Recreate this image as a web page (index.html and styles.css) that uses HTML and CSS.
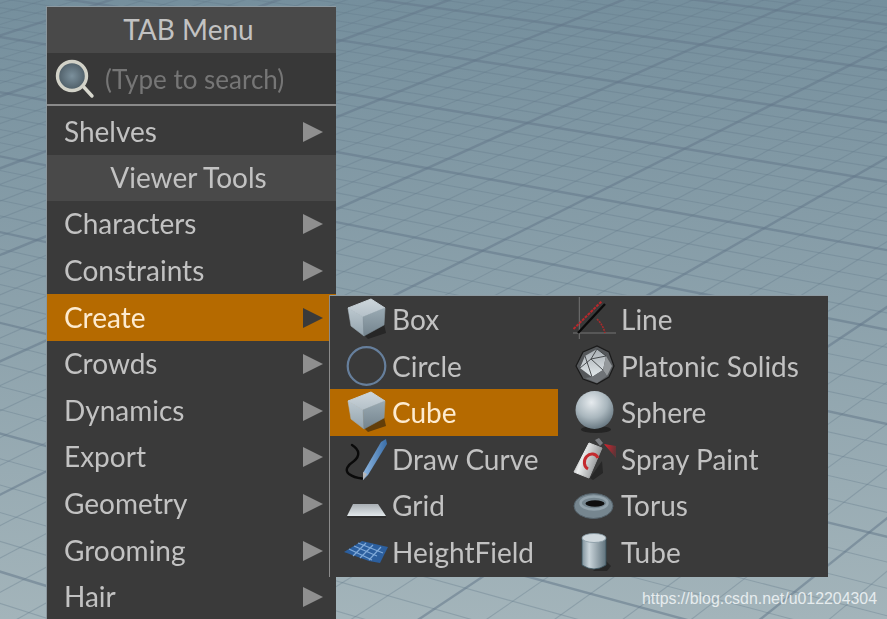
FILE: index.html
```html
<!DOCTYPE html>
<html lang="en">
<head>
  <meta charset="UTF-8" />
  <title>TAB Menu</title>
  <link rel="stylesheet" href="styles.css">
</head>
<body>
  <!-- shared gradients for the icons -->
  <svg class="defs" aria-hidden="true">
    <defs>
      <linearGradient id="faceTop" x1="0" y1="0" x2="0" y2="1"><stop offset="0" stop-color="#cdd6db"/><stop offset="1" stop-color="#b4c0c8"/></linearGradient>
      <linearGradient id="faceLeft" x1="0" y1="0" x2="0" y2="1"><stop offset="0" stop-color="#bcc8cf"/><stop offset="1" stop-color="#94a4ae"/></linearGradient>
      <linearGradient id="faceRight" x1="0" y1="0" x2="0" y2="1"><stop offset="0" stop-color="#9aaab3"/><stop offset="1" stop-color="#74848e"/></linearGradient>
      <radialGradient id="ball" cx="0.42" cy="0.3" r="0.75"><stop offset="0" stop-color="#e6ebee"/><stop offset="0.55" stop-color="#a9b6bd"/><stop offset="1" stop-color="#5f6f79"/></radialGradient>
      <radialGradient id="lens" cx="0.5" cy="0.5" r="0.6"><stop offset="0" stop-color="#7b909c"/><stop offset="1" stop-color="#44525b"/></radialGradient>
      <linearGradient id="tube" x1="0" y1="0" x2="1" y2="0"><stop offset="0" stop-color="#7f929c"/><stop offset="0.3" stop-color="#c9d4da"/><stop offset="1" stop-color="#5f727c"/></linearGradient>
      <linearGradient id="pen" x1="0" y1="0" x2="1" y2="0"><stop offset="0" stop-color="#8fb8e2"/><stop offset="1" stop-color="#3a6ea8"/></linearGradient>
      <linearGradient id="plate" x1="0" y1="0" x2="0" y2="1"><stop offset="0" stop-color="#a8aeb3"/><stop offset="1" stop-color="#e2e8eb"/></linearGradient>
      <linearGradient id="can" x1="0" y1="0" x2="1" y2="0.4"><stop offset="0" stop-color="#85888c"/><stop offset="0.4" stop-color="#eceeee"/><stop offset="1" stop-color="#8a8c8e"/></linearGradient>
      <linearGradient id="spray" x1="0" y1="0" x2="1" y2="0.3"><stop offset="0" stop-color="#e0202c"/><stop offset="1" stop-color="#e0202c" stop-opacity="0.25"/></linearGradient>
      <symbol id="cube" viewBox="0 0 40 42">
        <polygon points="17,37 37,26 39,35 21,41" fill="#111" opacity="0.5"/>
        <polygon points="1,10 24,1 38,10 16,19" fill="url(#faceTop)" stroke="url(#faceTop)" stroke-linejoin="round"/>
        <polygon points="1,10 16,19 17,38 4,28" fill="url(#faceLeft)" stroke="url(#faceLeft)" stroke-width="0.6" stroke-linejoin="round"/>
        <polygon points="16,19 38,10 37,27 17,38" fill="url(#faceRight)" stroke="url(#faceRight)" stroke-width="0.6" stroke-linejoin="round"/>
      </symbol>
    </defs>
  </svg>

  <svg class="floor" viewBox="0 0 887 619" aria-hidden="true"><g id="grid"></g></svg>

  <nav class="menu">
    <div class="menu-title">TAB Menu</div>
    <div class="search">
      <svg class="search-icon" viewBox="0 0 40 42">
        <line x1="26" y1="26" x2="37" y2="38" stroke="#d8d8ce" stroke-width="3.4" stroke-linecap="round"/>
        <circle cx="17" cy="18" r="14.5" fill="url(#lens)" stroke="#d2d2c8" stroke-width="3.4"/>
      </svg>
      <span>(Type to search)</span>
    </div>
    <div class="menu-item">Shelves<i class="arrow"></i></div>
    <div class="menu-title">Viewer Tools</div>
    <div class="menu-item">Characters<i class="arrow"></i></div>
    <div class="menu-item">Constraints<i class="arrow"></i></div>
    <div class="menu-item active">Create<i class="arrow"></i></div>
    <div class="menu-item">Crowds<i class="arrow"></i></div>
    <div class="menu-item">Dynamics<i class="arrow"></i></div>
    <div class="menu-item">Export<i class="arrow"></i></div>
    <div class="menu-item">Geometry<i class="arrow"></i></div>
    <div class="menu-item">Grooming<i class="arrow"></i></div>
    <div class="menu-item">Hair<i class="arrow"></i></div>
  </nav>

  <div class="submenu">
    <div class="tool">
      <svg class="icon" viewBox="0 0 44 44"><use href="#cube" x="3" y="1" width="40" height="42"/></svg>Box
    </div>
    <div class="tool">
      <svg class="icon" viewBox="0 0 44 44">
        <path d="M6.3 0 V42 M0 36 H43" stroke="#747474" stroke-width="1" fill="none"/>
        <path d="M0.5 32 L29 4" stroke="#b8282c" stroke-width="2" stroke-dasharray="3 1" fill="none"/>
        <path d="M24 22 Q30 28 32 36" stroke="#a82a2c" stroke-width="1.6" stroke-dasharray="2 1" fill="none"/>
        <path d="M5 36 L32 7" stroke="#0a0a0a" stroke-width="2.4" fill="none"/>
      </svg>Line
    </div>
    <div class="tool">
      <svg class="icon" viewBox="0 0 44 44"><circle cx="22.5" cy="22" r="18.8" fill="none" stroke="#667f9c" stroke-width="2.2"/></svg>Circle
    </div>
    <div class="tool">
      <svg class="icon" viewBox="0 0 44 44">
        <polygon points="3,22 10,8 24,2 36,8 41,22 36,33 24,40 10,35" fill="#55585b" stroke="#1a1a1a" stroke-width="1.2"/>
        <polygon points="12,12 24,5 33,12 30,26 19,33 7,24" fill="url(#plate)"/>
        <polygon points="33,12 39,22 34,32 30,26" fill="#94989b"/>
        <polygon points="19,33 30,26 34,32 24,39 12,34" fill="#6f7377"/>
        <path d="M12 12 L19 33 M24 5 L18 15 L30 26 M18 15 L7 24 M18 15 L33 12 M24 5 L33 12" stroke="#3b3e41" stroke-width="0.9" fill="none"/>
      </svg>Platonic Solids
    </div>
    <div class="tool active">
      <svg class="icon" viewBox="0 0 44 44"><use href="#cube" x="3" y="1" width="40" height="42"/></svg>Cube
    </div>
    <div class="tool">
      <svg class="icon" viewBox="0 0 44 44">
        <ellipse cx="23" cy="39.5" rx="15" ry="3.5" fill="#151515" opacity="0.6"/>
        <circle cx="21.5" cy="20" r="19" fill="url(#ball)"/>
      </svg>Sphere
    </div>
    <div class="tool">
      <svg class="icon" viewBox="0 0 44 44">
        <path d="M8 8 C16 13 16 19 10 24 C4 28 0 33 5 37 C9 40 13 41 18 41.5" fill="none" stroke="#0a0a0a" stroke-width="2.4" stroke-linecap="round"/>
        <polygon points="37,5 42,2 43,7 24,38 19,43 19,36" fill="url(#pen)"/>
        <polygon points="23,37 19,43 19,35" fill="#b8b8b8"/>
      </svg>Draw Curve
    </div>
    <div class="tool">
      <svg class="icon" viewBox="0 0 44 44">
        <polygon points="17,41 29,24 30,36 20,43" fill="#141414" opacity="0.5"/>
        <polygon points="31,7 43,9 43,21" fill="url(#spray)"/>
        <polygon points="22,3 26,1 30,6 27,9" fill="#7a7c80"/>
        <polygon points="16,6 29,11 16,41 1,35" fill="url(#can)" stroke="url(#can)" stroke-width="1" stroke-linejoin="round"/>
        <path d="M25 21 A7 8 20 1 0 15 32" fill="none" stroke="#c42a2e" stroke-width="3"/>
      </svg>Spray Paint
    </div>
    <div class="tool">
      <svg class="icon" viewBox="0 0 44 44">
        <polygon points="3,33 42,33 42,35 3,35" fill="#2e2e2e"/>
        <polygon points="3,33 9,21 34,21 42,33" fill="url(#plate)"/>
      </svg>Grid
    </div>
    <div class="tool">
      <svg class="icon" viewBox="0 0 44 44">
        <ellipse cx="20.5" cy="23" rx="19.5" ry="12.5" fill="#76868f" stroke="#56646d" stroke-width="1"/>
        <ellipse cx="21" cy="20" rx="13.5" ry="6.5" fill="none" stroke="#93a3ac" stroke-width="2.5"/>
        <ellipse cx="22" cy="20.5" rx="9.5" ry="3.2" fill="#0e0e0e"/>
      </svg>Torus
    </div>
    <div class="tool">
      <svg class="icon" viewBox="0 0 44 44">
        <polygon points="0,22 18,11 44,17 36,33 25,31" fill="#2c5f9e"/>
        <path d="M5 19 L28 30 M10 16 L33 26 M14 13 L39 23 M9 26 L22 13 M16 28 L29 15 M25 30 L37 17" stroke="#7fa9d8" stroke-width="1.2"/>
      </svg>HeightField
    </div>
    <div class="tool">
      <svg class="icon" viewBox="0 0 44 44">
        <polygon points="32,30 38,36 34,41 20,41" fill="#141414" opacity="0.5"/>
        <path d="M9 8 V35 Q21 43 33 35 V8 Z" fill="url(#tube)" stroke="#39515c" stroke-width="0.8"/>
        <ellipse cx="21" cy="8" rx="12" ry="4.5" fill="#cfd8dd" stroke="#8598a2" stroke-width="0.8"/>
      </svg>Tube
    </div>
  </div>

  <div class="watermark">https://blog.csdn.net/u012204304</div>

  <script>
    // floor grid, lines run from the two vanishing points
    const grid = document.getElementById("grid");
    const horizon = -696;

    function addLine(vp, c, major) {
      const l = document.createElementNS("http://www.w3.org/2000/svg", "line");
      const far = 6;
      l.setAttribute("x1", vp.x);
      l.setAttribute("y1", vp.y);
      l.setAttribute("x2", vp.x + (337 - vp.x) * far);
      l.setAttribute("y2", vp.y + (c - vp.y) * far);
      l.setAttribute("class", major ? "major" : "minor");
      grid.appendChild(l);
    }

    function family(vp, start, step) {
      for (let k = -60; k <= 100; k++) {
        const d = start - step * k / 5;
        if (d < 0.00006) break;
        addLine(vp, horizon + 1 / d, k % 5 === 0);
      }
    }

    family({ x: -3663, y: -560 }, 0.001359, 0.00009);
    family({ x: 2502, y: -770 }, 0.00123, 0.000125);
  </script>
</body>
</html>
```
FILE: styles.css
```css
body {
  margin: 0;
  width: 887px;
  height: 619px;
  position: relative;
  overflow: hidden;
  font-family: Lato, "Open Sans", sans-serif;
  font-size: 28px;
  color: #c2c2c2;
  background: linear-gradient(#758f9d, #a3b4ba);
}

.defs {
  position: absolute;
  width: 0;
  height: 0;
}

.floor {
  position: absolute;
  left: 0;
  top: 0;
  width: 887px;
  height: 619px;
  filter: blur(0.6px);
}

.major {
  stroke: #64798a;
  stroke-opacity: 0.55;
  stroke-width: 2.4;
}

.minor {
  stroke: #64798a;
  stroke-opacity: 0.36;
  stroke-width: 1.1;
}

.menu {
  position: absolute;
  left: 47px;
  top: 6px;
  width: 289px;
  height: 620px;
  display: flex;
  flex-direction: column;
  background: #3a3a3a;
  border-top: 1px solid #8d9aa2;
  box-shadow: -1px 0 0 #8b979e;
  filter: blur(0.35px);
}

.menu-title {
  height: 46px;
  flex-shrink: 0;
  padding: 0 6px 2px 0;
  box-sizing: border-box;
  display: flex;
  align-items: center;
  justify-content: center;
  background: #494949;
}

.search {
  height: 53px;
  flex-shrink: 0;
  margin-bottom: 2.5px;
  display: flex;
  align-items: center;
  gap: 10px;
  padding-left: 8px;
  background: #383838;
  border-bottom: 2px solid #8a8a8a;
  box-sizing: border-box;
  color: #767676;
  font-size: 26px;
}

.search-icon {
  width: 40px;
  height: 42px;
}

.menu-item {
  height: 46.6px;
  flex-shrink: 0;
  box-sizing: border-box;
  display: flex;
  align-items: center;
  justify-content: space-between;
  padding: 0 13px 2px 17px;
}

.menu-item.active,
.tool.active {
  background: #b56a00;
  color: #fdebd0;
}

.arrow {
  width: 0;
  height: 0;
  margin-top: 2px;
  border-left: 20px solid #8f8f8f;
  border-top: 10px solid transparent;
  border-bottom: 10px solid transparent;
}

.menu-item.active .arrow {
  border-left-color: #3a3a3a;
}

.submenu {
  position: absolute;
  left: 330px;
  top: 295px;
  width: 498px;
  height: 282px;
  box-sizing: border-box;
  display: grid;
  grid-template-columns: 228px 270px;
  grid-auto-rows: 46.5px;
  background: #3a3a3a;
  border-top: 1px solid #8d9aa2;
  box-shadow: -1px 0 0 #8b8b8b;
  filter: blur(0.35px);
}

.tool {
  display: flex;
  align-items: center;
  gap: 4px;
  padding-left: 14px;
}

.tool:nth-child(even) {
  padding-left: 15px;
}

.icon {
  width: 44px;
  height: 44px;
  flex-shrink: 0;
}

.watermark {
  position: absolute;
  left: 642px;
  top: 590px;
  font-family: "Liberation Sans", Arial, sans-serif;
  font-size: 15.9px;
  color: #e6ecee;
}
```
